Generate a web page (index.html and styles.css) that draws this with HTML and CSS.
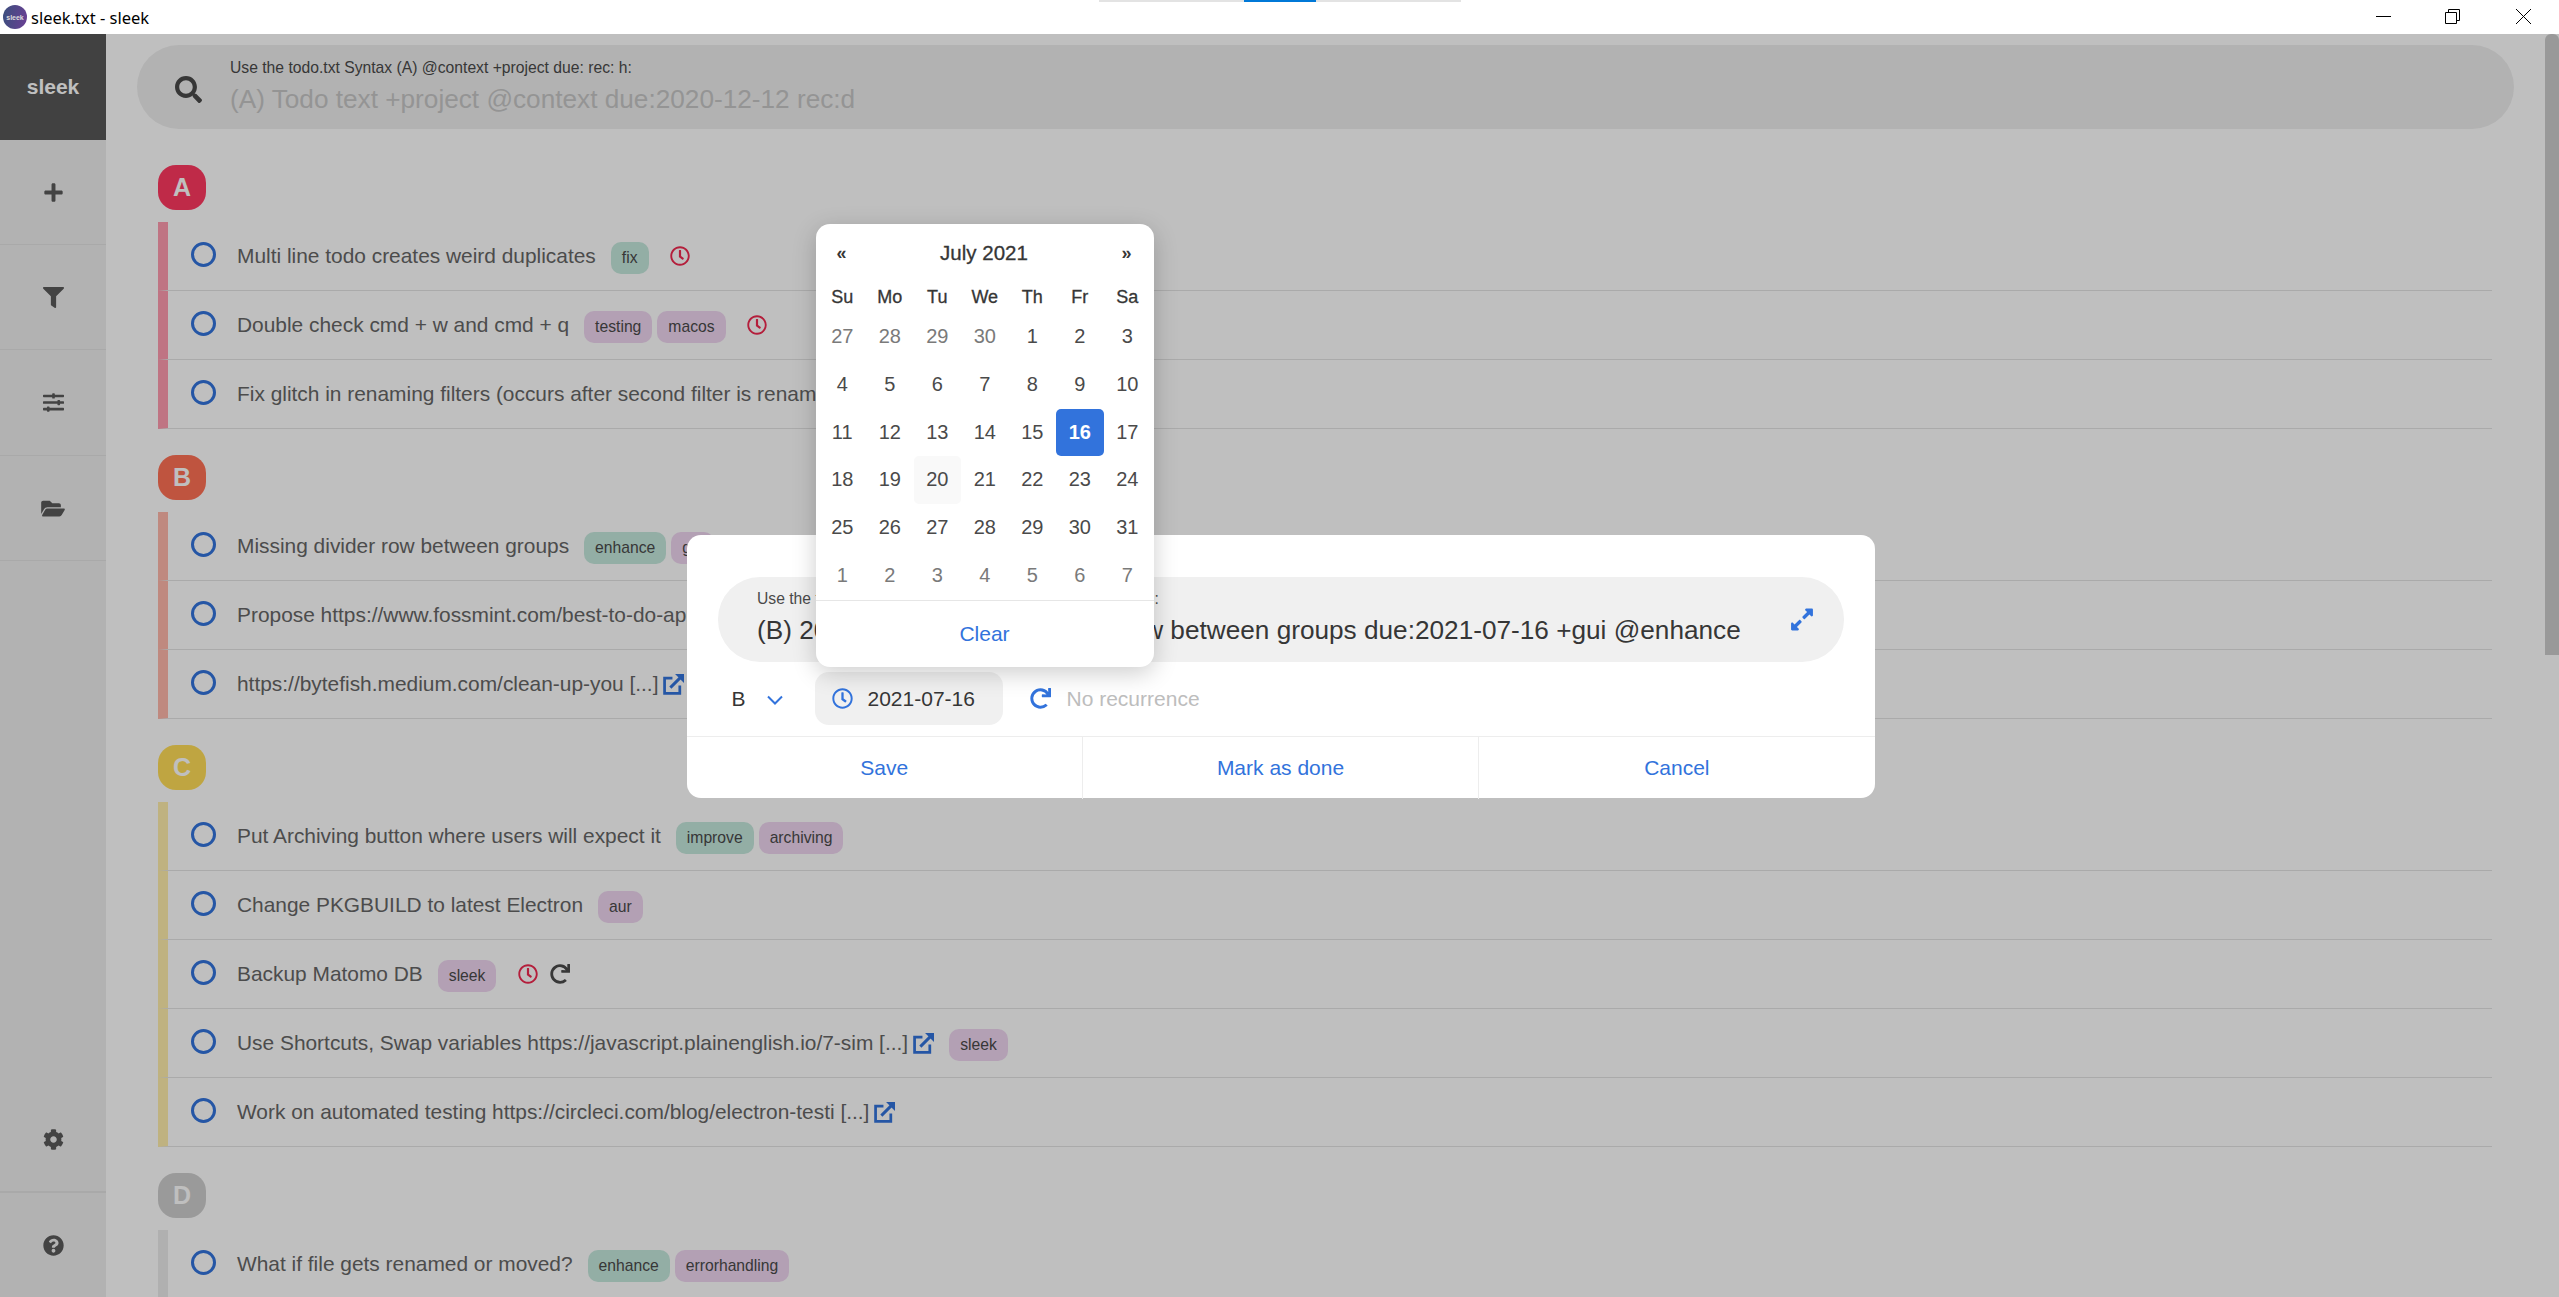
FILE: index.html
```html
<!DOCTYPE html>
<html lang="en">
<head>
  <meta charset="UTF-8" />
  <title>sleek.txt - sleek</title>
  <link rel="stylesheet" href="styles.css">
</head>
<body>
  <!-- FontAwesome style icons, reused below -->
  <svg class="sprites" xmlns="http://www.w3.org/2000/svg">
    <symbol id="i-search" viewBox="0 0 512 512"><path d="M505 442.7L405.3 343c-4.5-4.5-10.6-7-17-7H372c27.6-35.3 44-79.7 44-128C416 93.1 322.9 0 208 0S0 93.1 0 208s93.1 208 208 208c48.3 0 92.7-16.4 128-44v16.3c0 6.4 2.5 12.5 7 17l99.7 99.7c9.4 9.4 24.6 9.4 33.9 0l28.3-28.3c9.4-9.4 9.4-24.6.1-34zM208 336c-70.7 0-128-57.2-128-128 0-70.7 57.2-128 128-128 70.7 0 128 57.2 128 128 0 70.7-57.2 128-128 128z"/></symbol>
    <symbol id="i-plus" viewBox="0 0 448 512"><path d="M416 208H272V64c0-17.67-14.33-32-32-32h-32c-17.67 0-32 14.33-32 32v144H32c-17.67 0-32 14.33-32 32v32c0 17.67 14.33 32 32 32h144v144c0 17.67 14.33 32 32 32h32c17.67 0 32-14.33 32-32V304h144c17.67 0 32-14.33 32-32v-32c0-17.67-14.33-32-32-32z"/></symbol>
    <symbol id="i-filter" viewBox="0 0 512 512"><path d="M487.976 0H24.028C2.71 0-8.047 25.866 7.058 40.971L192 225.941V432c0 7.831 3.821 15.17 10.237 19.662l80 55.98C298.02 518.69 320 507.493 320 487.98V225.941l184.947-184.97C520.021 25.896 509.338 0 487.976 0z"/></symbol>
    <symbol id="i-sliders" viewBox="0 0 512 512"><path d="M496 384H160v-16c0-8.8-7.2-16-16-16h-32c-8.8 0-16 7.2-16 16v16H16c-8.8 0-16 7.2-16 16v32c0 8.8 7.2 16 16 16h80v16c0 8.8 7.2 16 16 16h32c8.8 0 16-7.2 16-16v-16h336c8.8 0 16-7.2 16-16v-32c0-8.8-7.2-16-16-16zm0-160h-80v-16c0-8.8-7.2-16-16-16h-32c-8.8 0-16 7.2-16 16v16H16c-8.8 0-16 7.2-16 16v32c0 8.8 7.2 16 16 16h336v16c0 8.8 7.2 16 16 16h32c8.8 0 16-7.2 16-16v-16h80c8.8 0 16-7.2 16-16v-32c0-8.8-7.2-16-16-16zm0-160H288V48c0-8.8-7.2-16-16-16h-32c-8.8 0-16 7.2-16 16v16H16C7.2 64 0 71.2 0 80v32c0 8.8 7.2 16 16 16h208v16c0 8.8 7.2 16 16 16h32c8.8 0 16-7.2 16-16v-16h208c8.8 0 16-7.2 16-16V80c0-8.8-7.2-16-16-16z"/></symbol>
    <symbol id="i-folder" viewBox="0 0 576 512"><path d="M572.694 292.093L500.27 416.248A63.997 63.997 0 0 1 444.989 448H45.025c-18.523 0-30.064-20.093-20.731-36.093l72.424-124.155A64 64 0 0 1 152 256h399.964c18.523 0 30.064 20.093 20.73 36.093zM152 224h328v-48c0-26.51-21.49-48-48-48H272l-64-64H48C21.49 64 0 85.49 0 112v278.046l69.077-118.418C86.214 242.25 117.989 224 152 224z"/></symbol>
    <symbol id="i-cog" viewBox="0 0 512 512"><path d="M487.4 315.7l-42.6-24.6c4.3-23.2 4.3-47 0-70.2l42.6-24.6c4.9-2.8 7.1-8.6 5.5-14-11.1-35.6-30-67.8-54.7-94.6-3.8-4.1-10-5.1-14.8-2.3L380.8 110c-17.9-15.4-38.5-27.3-60.8-35.1V25.8c0-5.6-3.9-10.5-9.4-11.7-36.7-8.2-74.3-7.8-109.2 0-5.5 1.2-9.4 6.1-9.4 11.7V75c-22.2 7.9-42.8 19.8-60.8 35.1L88.7 85.5c-4.9-2.8-11-1.9-14.8 2.3-24.7 26.7-43.6 58.9-54.7 94.6-1.7 5.4.6 11.2 5.5 14L67.3 221c-4.3 23.2-4.3 47 0 70.2l-42.6 24.6c-4.9 2.8-7.1 8.6-5.5 14 11.1 35.6 30 67.8 54.7 94.6 3.8 4.1 10 5.1 14.8 2.3l42.6-24.6c17.9 15.4 38.5 27.3 60.8 35.1v49.2c0 5.6 3.9 10.5 9.4 11.7 36.7 8.2 74.3 7.8 109.2 0 5.5-1.2 9.4-6.1 9.4-11.7v-49.2c22.2-7.9 42.8-19.8 60.8-35.1l42.6 24.6c4.9 2.8 11 1.9 14.8-2.3 24.7-26.7 43.6-58.9 54.7-94.6 1.5-5.5-.7-11.3-5.6-14.1zM256 336c-44.1 0-80-35.9-80-80s35.9-80 80-80 80 35.9 80 80-35.9 80-80 80z"/></symbol>
    <symbol id="i-help" viewBox="0 0 512 512"><path d="M504 256c0 136.997-111.043 248-248 248S8 392.997 8 256C8 119.083 119.043 8 256 8s248 111.083 248 248zM262.655 90c-54.497 0-89.255 22.957-116.549 63.758-3.536 5.286-2.353 12.415 2.715 16.258l34.699 26.31c5.205 3.947 12.621 3.008 16.665-2.122 17.864-22.658 30.113-35.797 57.303-35.797 20.429 0 45.698 13.148 45.698 32.958 0 14.976-12.363 22.667-32.534 33.976C247.128 238.528 216 254.941 216 296v4c0 6.627 5.373 12 12 12h56c6.627 0 12-5.373 12-12v-1.333c0-28.462 83.186-29.647 83.186-106.667 0-58.002-60.165-102-116.531-102zM256 338c-25.365 0-46 20.635-46 46 0 25.364 20.635 46 46 46s46-20.636 46-46c0-25.365-20.635-46-46-46z"/></symbol>
    <symbol id="i-clock" viewBox="0 0 512 512"><path d="M256 8C119 8 8 119 8 256s111 248 248 248 248-111 248-248S393 8 256 8zm0 448c-110.500 0-200-89.500-200-200S145.500 56 256 56s200 89.500 200 200-89.500 200-200 200zm61.800-104.400l-84.900-61.700c-3.100-2.300-4.900-5.900-4.900-9.700V116c0-6.600 5.400-12 12-12h32c6.600 0 12 5.400 12 12v141.700l66.800 48.600c5.400 3.900 6.500 11.400 2.600 16.800L334.600 349c-3.900 5.300-11.400 6.500-16.800 2.600z"/></symbol>
    <symbol id="i-redo" viewBox="0 0 512 512"><path d="M500.33 0h-47.41a12 12 0 0 0-12 12.57l4 82.76A247.42 247.42 0 0 0 256 8C119.34 8 7.9 119.53 8 256.19 8.1 393.07 119.1 504 256 504a247.1 247.1 0 0 0 166.18-63.91 12 12 0 0 0 .48-17.43l-34-34a12 12 0 0 0-16.38-.55A176 176 0 1 1 402.1 157.8l-101.53-4.87a12 12 0 0 0-12.57 12v47.41a12 12 0 0 0 12 12h200.33a12 12 0 0 0 12-12V12a12 12 0 0 0-12-12z"/></symbol>
    <symbol id="i-link" viewBox="0 0 20 20"><path d="M9 4H1.500v14.500H16V11" fill="none" stroke="currentColor" stroke-width="2.600"/><path d="M7 13L17 3" fill="none" stroke="currentColor" stroke-width="2.800"/><path d="M11.500 0H20V8.500z"/></symbol>
    <symbol id="i-expand" viewBox="0 0 448 512"><path d="M212.686 315.314L120 408l32.922 31.029c15.12 15.12 4.412 40.971-16.97 40.971h-112C10.697 480 0 469.255 0 456V344c0-21.382 25.803-32.09 40.922-16.971L72 360l92.686-92.686c6.248-6.248 16.379-6.248 22.627 0l25.373 25.373c6.249 6.248 6.249 16.378 0 22.627zm22.628-118.628L328 104l-32.922-31.029C279.958 57.851 290.666 32 312.048 32h112C437.303 32 448 42.745 448 56v112c0 21.382-25.803 32.09-40.922 16.971L376 152l-92.686 92.686c-6.248 6.248-16.379 6.248-22.627 0l-25.373-25.373c-6.249-6.248-6.249-16.378 0-22.627z"/></symbol>
  </svg>

  <!-- Window title bar -->
  <header class="titlebar">
    <div class="loader-strip"><span class="loader-thumb"></span></div>
    <div class="logo"><span>sleek</span></div>
    <span class="window-title">sleek.txt - sleek</span>
    <div class="window-controls">
      <svg class="win-min" width="15" height="15" viewBox="0 0 15 15"><path d="M0 7.500H15" stroke="#000" fill="none"/></svg>
      <svg class="win-max" width="15" height="15" viewBox="0 0 15 15"><path d="M.5 3.500H11.500V14.500H.5zM3.500 3.500V.5H14.500V11.500H11.500" stroke="#000" fill="none"/></svg>
      <svg class="win-close" width="15" height="15" viewBox="0 0 15 15"><path d="M0 0L15 15M15 0L0 15" stroke="#000" fill="none"/></svg>
    </div>
  </header>

  <div class="app">
    <nav class="sidebar">
      <div class="brand">sleek</div>
      <a class="side-item"><svg class="icon-plus"><use href="#i-plus"/></svg></a>
      <a class="side-item"><svg class="icon-filter"><use href="#i-filter"/></svg></a>
      <a class="side-item"><svg class="icon-sliders"><use href="#i-sliders"/></svg></a>
      <a class="side-item"><svg class="icon-folder"><use href="#i-folder"/></svg></a>
      <div class="side-spacer"></div>
      <a class="side-item side-bottom"><svg class="icon-cog"><use href="#i-cog"/></svg></a>
      <a class="side-item side-bottom last"><svg class="icon-help"><use href="#i-help"/></svg></a>
    </nav>

    <main class="content">
      <div class="search">
        <svg class="search-icon"><use href="#i-search"/></svg>
        <div class="search-text">
          <div class="syntax-hint">Use the todo.txt Syntax (A) @context +project due: rec: h:</div>
          <div class="search-placeholder">(A) Todo text +project @context due:2020-12-12 rec:d</div>
        </div>
      </div>

      <section class="group">
        <div class="prio prio-a">A</div>
        <div class="todo bar-a">
          <span class="check"></span><span class="todo-text">Multi line todo creates weird duplicates</span>
          <span class="tag tag-context">fix</span>
          <svg class="todo-clock"><use href="#i-clock"/></svg>
        </div>
        <div class="todo bar-a">
          <span class="check"></span><span class="todo-text">Double check cmd + w and cmd + q</span>
          <span class="tag tag-project">testing</span><span class="tag tag-project">macos</span>
          <svg class="todo-clock"><use href="#i-clock"/></svg>
        </div>
        <div class="todo bar-a">
          <span class="check"></span><span class="todo-text">Fix glitch in renaming filters (occurs after second filter is renamed)</span>
        </div>
      </section>

      <section class="group">
        <div class="prio prio-b">B</div>
        <div class="todo bar-b">
          <span class="check"></span><span class="todo-text">Missing divider row between groups</span>
          <span class="tag tag-context">enhance</span><span class="tag tag-project">gui</span>
          <svg class="todo-clock"><use href="#i-clock"/></svg>
        </div>
        <div class="todo bar-b">
          <span class="check"></span><span class="todo-text">Propose https://www.fossmint.com/best-to-do-apps/</span>
        </div>
        <div class="todo bar-b">
          <span class="check"></span><span class="todo-text">https://bytefish.medium.com/clean-up-you [...]</span>
          <svg class="todo-link"><use href="#i-link"/></svg>
        </div>
      </section>

      <section class="group">
        <div class="prio prio-c">C</div>
        <div class="todo bar-c">
          <span class="check"></span><span class="todo-text">Put Archiving button where users will expect it</span>
          <span class="tag tag-context">improve</span><span class="tag tag-project">archiving</span>
        </div>
        <div class="todo bar-c">
          <span class="check"></span><span class="todo-text">Change PKGBUILD to latest Electron</span>
          <span class="tag tag-project">aur</span>
        </div>
        <div class="todo bar-c">
          <span class="check"></span><span class="todo-text">Backup Matomo DB</span>
          <span class="tag tag-project">sleek</span>
          <svg class="todo-clock"><use href="#i-clock"/></svg>
          <svg class="todo-redo"><use href="#i-redo"/></svg>
        </div>
        <div class="todo bar-c">
          <span class="check"></span><span class="todo-text">Use Shortcuts, Swap variables https://javascript.plainenglish.io/7-sim [...]</span>
          <svg class="todo-link"><use href="#i-link"/></svg>
          <span class="tag tag-project">sleek</span>
        </div>
        <div class="todo bar-c">
          <span class="check"></span><span class="todo-text">Work on automated testing https://circleci.com/blog/electron-testi [...]</span>
          <svg class="todo-link"><use href="#i-link"/></svg>
        </div>
      </section>

      <section class="group">
        <div class="prio prio-d">D</div>
        <div class="todo bar-d">
          <span class="check"></span><span class="todo-text">What if file gets renamed or moved?</span>
          <span class="tag tag-context">enhance</span><span class="tag tag-project">errorhandling</span>
        </div>
      </section>
    </main>

    <div class="scroll-thumb"></div>

    <!-- Dimmed backdrop + edit dialog -->
    <div class="backdrop">
      <div class="modal">
        <div class="modal-body">
          <div class="todo-input">
            <div class="input-text">
              <div class="syntax-hint">Use the todo.txt Syntax (A) @context +project due: rec: h:</div>
              <div class="input-value">(B) 2021-07-16 Missing divider row between groups due:2021-07-16 +gui @enhance</div>
            </div>
            <svg class="expand-icon"><use href="#i-expand"/></svg>
          </div>
          <div class="input-options">
            <div class="prio-select">B
              <svg class="chevron" viewBox="0 0 16 10"><path d="M1 1.500L8 8.500L15 1.500" fill="none" stroke="currentColor" stroke-width="2"/></svg>
            </div>
            <div class="date-field"><svg class="date-clock"><use href="#i-clock"/></svg>2021-07-16</div>
            <div class="recurrence"><svg class="rec-icon"><use href="#i-redo"/></svg>No recurrence</div>
          </div>
        </div>
        <div class="modal-footer">
          <a class="modal-btn">Save</a>
          <a class="modal-btn">Mark as done</a>
          <a class="modal-btn">Cancel</a>
        </div>

        <!-- Date picker sits over the dialog -->
        <div class="datepicker">
          <div class="dp-nav"><span class="dp-arrow">«</span><span class="dp-title">July 2021</span><span class="dp-arrow">»</span></div>
          <div class="dp-grid dp-week">
            <span>Su</span><span>Mo</span><span>Tu</span><span>We</span><span>Th</span><span>Fr</span><span>Sa</span>
          </div>
          <div class="dp-grid dp-days">
            <span class="out">27</span><span class="out">28</span><span class="out">29</span><span class="out">30</span><span>1</span><span>2</span><span>3</span>
            <span>4</span><span>5</span><span>6</span><span>7</span><span>8</span><span>9</span><span>10</span>
            <span>11</span><span>12</span><span>13</span><span>14</span><span>15</span><span class="selected">16</span><span>17</span>
            <span>18</span><span>19</span><span class="focused">20</span><span>21</span><span>22</span><span>23</span><span>24</span>
            <span>25</span><span>26</span><span>27</span><span>28</span><span>29</span><span>30</span><span>31</span>
            <span class="out">1</span><span class="out">2</span><span class="out">3</span><span class="out">4</span><span class="out">5</span><span class="out">6</span><span class="out">7</span>
          </div>
          <div class="dp-footer">Clear</div>
        </div>
      </div>
    </div>
  </div>
</body>
</html>
```

FILE: styles.css
```css
/* ==============================================
   PAGE
   ============================================== */
html, body {
  height: 100%;
}
body {
  margin: 0;
  display: flex;
  flex-direction: column;
  overflow: hidden;
  background: #fff;
  color: #666;
  font-family: "Liberation Sans", Arial, sans-serif;
  font-size: 20.9px;
}
svg {
  display: block;
  flex: none;
  fill: currentColor;
}
.sprites {
  display: none;
}

/* ==============================================
   TITLE BAR
   ============================================== */
.titlebar {
  position: relative;
  display: flex;
  align-items: center;
  flex: none;
  height: 34px;
  padding-left: 3px;
  background: #fff;
  color: #000;
}
.loader-strip {
  position: absolute;
  top: 0;
  left: 1099px;
  display: flex;
  justify-content: center;
  width: 362px;
  height: 2px;
  background: #e3e3e3;
}
.loader-thumb {
  width: 72px;
  background: #0078d7;
}
.logo {
  display: flex;
  align-items: center;
  justify-content: center;
  width: 24px;
  height: 24px;
  border-radius: 50%;
  background: linear-gradient(100deg, #3a4f7d, #6b3f94);
  color: #ddd;
  font-size: 7px;
  font-weight: bold;
}
.window-title {
  margin-left: 4px;
  font-family: "Noto Sans", sans-serif;
  font-size: 16.5px;
}
.window-controls {
  display: flex;
  align-items: center;
  gap: 54px;
  margin-left: auto;
  padding-right: 28px;
  padding-bottom: 1px;
}
.win-max {
  margin-right: 2px;
}

/* ==============================================
   APP + SIDEBAR
   ============================================== */
.app {
  position: relative;
  display: flex;
  flex: 1;
  min-height: 0;
}
.sidebar {
  display: flex;
  flex-direction: column;
  flex: none;
  width: 106px;
  background: #eee;
  color: #5a5a5a;
}
.brand {
  display: flex;
  align-items: center;
  justify-content: center;
  height: 106px;
  background: #575757;
  color: #fff;
  font-size: 21px;
  font-weight: bold;
}
.side-item {
  display: flex;
  align-items: center;
  justify-content: center;
  box-sizing: border-box;
  height: 105.5px;
  padding-top: 1px;
  border-bottom: 1px solid #e2e2e2;
}
.brand + .side-item {
  height: 104.5px;
}
.side-spacer {
  flex: 1;
}
.side-bottom {
  border-top: 1px solid transparent;
}
.side-bottom.last {
  height: 105px;
  padding-top: 0;
  border-top: 1px solid #e2e2e2;
  border-bottom: 0;
}
.icon-plus { width: 19px; height: 21px; }
.icon-filter { width: 21px; height: 21px; }
.icon-sliders { width: 21px; height: 21px; }
.icon-folder { width: 24px; height: 21px; }
.icon-cog { width: 21px; height: 21px; }
.icon-help { width: 21px; height: 21px; }

/* ==============================================
   MAIN LIST
   ============================================== */
.content {
  flex: 1;
  min-width: 0;
  padding: 11px 67px 0 52px;
  overflow: hidden;
}
.search {
  display: flex;
  align-items: center;
  height: 84px;
  margin: 0 -22px 36px -21px;
  padding-left: 38px;
  border-radius: 42px;
  background: #eee;
}
.search-icon {
  width: 27px;
  height: 27px;
  margin-top: 5px;
  color: #4a4a4a;
}
.search-text {
  margin-left: 28px;
  margin-bottom: 2px;
}
.syntax-hint {
  font-size: 15.7px;
  line-height: 18px;
  color: #4a4a4a;
}
.search-placeholder {
  margin-top: 7px;
  font-size: 26.2px;
  line-height: 30px;
  color: #c6c6c6;
}
.group {
  margin-bottom: 26px;
}
.prio {
  display: flex;
  align-items: center;
  justify-content: center;
  width: 48px;
  height: 45px;
  margin-bottom: 12px;
  border-radius: 18px;
  color: #fff;
  font-size: 25px;
  font-weight: bold;
}
.prio-a { background: #ff3860; }
.prio-b { background: #ff7055; }
.prio-c { background: #ffdd57; }
.prio-d { background: #cecece; }

.todo {
  display: flex;
  align-items: center;
  box-sizing: border-box;
  height: 69px;
  padding-left: 23px;
  border-left: 10px solid;
  border-bottom: 1px solid #e3e3e3;
  white-space: nowrap;
}
.bar-a { border-left-color: #ff9baf; }
.bar-b { border-left-color: #ffb7aa; }
.bar-c { border-left-color: #ffeeab; }
.bar-d { border-left-color: #ebebeb; }

.check {
  flex: none;
  box-sizing: border-box;
  width: 25px;
  height: 25px;
  margin-top: -3px;
  border: 3px solid #3273dc;
  border-radius: 50%;
}
.todo-text {
  margin-left: 21px;
}
.tag {
  display: flex;
  align-items: center;
  height: 32px;
  margin-top: 4px;
  margin-left: 5px;
  padding: 0 11px;
  border-radius: 10px;
  font-size: 15.7px;
  color: #4a4a4a;
}
.todo-text + .tag,
.todo-link + .tag {
  margin-left: 15px;
}
.tag-context { background: #c5e8dd; }
.tag-project { background: #efd6f1; }
.todo-clock {
  width: 20px;
  height: 20px;
  margin-left: 21.5px;
  color: #f0284f;
}
.todo-redo {
  width: 20px;
  height: 20px;
  margin-left: 12px;
  color: #4a4a4a;
}
.todo-link {
  width: 21px;
  height: 21px;
  margin-left: 5px;
  color: #3273dc;
}
.scroll-thumb {
  position: absolute;
  top: 0;
  right: 0;
  width: 14px;
  height: 621px;
  border-radius: 6px 6px 0 0;
  background: #cdcdcd;
}

/* ==============================================
   BACKDROP + DIALOG
   ============================================== */
.backdrop {
  position: absolute;
  inset: 0;
  display: flex;
  align-items: center;
  justify-content: center;
  padding-top: 2px;
  padding-left: 2px;
  background: rgba(0, 0, 0, 0.25);
}
.modal {
  position: relative;
  width: 1188px;
  height: 263px;
  border-radius: 14px;
  background: #fff;
  color: #363636;
  font-size: 21px;
}
.modal-body {
  height: 201px;
  box-sizing: border-box;
  padding: 42px 31px 0;
}
.todo-input {
  display: flex;
  align-items: center;
  justify-content: space-between;
  height: 85px;
  padding: 0 31px 0 39.5px;
  border-radius: 42px;
  background: #f0f0f0;
}
.input-text {
  margin-bottom: 4.5px;
}
.input-value {
  margin-top: 7.5px;
  font-size: 26.2px;
  line-height: 30px;
  white-space: nowrap;
}
.expand-icon {
  width: 22px;
  height: 25px;
  color: #3273dc;
}
.input-options {
  display: flex;
  align-items: center;
  height: 53px;
  margin-top: 10px;
  margin-left: -1px;
}
.prio-select {
  display: flex;
  align-items: center;
  width: 98px;
  padding-left: 15px;
  box-sizing: border-box;
  gap: 21px;
}
.chevron {
  width: 16px;
  height: 10px;
  margin-top: 2px;
  color: #3273dc;
}
.date-field {
  display: flex;
  align-items: center;
  box-sizing: border-box;
  width: 188px;
  height: 53px;
  padding-left: 17px;
  border-radius: 14px;
  background: #f0f0f0;
}
.date-clock {
  width: 21px;
  height: 21px;
  margin-right: 15px;
  color: #3273dc;
}
.recurrence {
  display: flex;
  align-items: center;
  margin-left: 27px;
  color: #bdbdbd;
}
.rec-icon {
  width: 21px;
  height: 21px;
  margin-right: 16px;
  color: #3273dc;
}
.modal-footer {
  display: flex;
  height: 62px;
  border-top: 1px solid #ededed;
}
.modal-btn {
  display: flex;
  flex: 1;
  align-items: center;
  justify-content: center;
  color: #3273dc;
  border-left: 1px solid #ededed;
}
.modal-btn:first-child {
  border-left: 0;
}

/* ==============================================
   DATE PICKER
   ============================================== */
.datepicker {
  position: absolute;
  top: -311px;
  left: 129px;
  box-sizing: border-box;
  width: 338px;
  height: 443px;
  padding-top: 9px;
  border-radius: 14px;
  background: #fff;
  box-shadow: 0 6px 24px rgba(0, 0, 0, 0.2);
  color: #4a4a4a;
  font-size: 20px;
}
.dp-nav {
  display: flex;
  align-items: center;
  justify-content: space-between;
  height: 40px;
  padding: 0 3px 0 2px;
  font-size: 20.5px;
  color: #363636;
  -webkit-text-stroke: 0.3px;
}
.dp-arrow {
  width: 48px;
  text-align: center;
  font-size: 18px;
  font-weight: bold;
  -webkit-text-stroke: 0;
}
.dp-grid {
  display: grid;
  grid-template-columns: repeat(7, 47.5px);
  padding: 0 3px;
  text-align: center;
}
.dp-week {
  height: 32px;
  margin-top: 8px;
  line-height: 32px;
  font-size: 18px;
  color: #363636;
  -webkit-text-stroke: 0.3px;
}
.dp-days {
  grid-auto-rows: 47.8px;
  line-height: 47.8px;
}
.dp-days .out {
  color: #7a7a7a;
}
.dp-days .selected {
  border-radius: 5px;
  background: #3273dc;
  color: #fff;
  font-weight: bold;
}
.dp-days .focused {
  border-radius: 5px;
  background: #f9f9f9;
}
.dp-footer {
  height: 66px;
  line-height: 66px;
  border-top: 1px solid #e6e6e6;
  text-align: center;
  color: #3273dc;
  font-size: 21px;
}
```
